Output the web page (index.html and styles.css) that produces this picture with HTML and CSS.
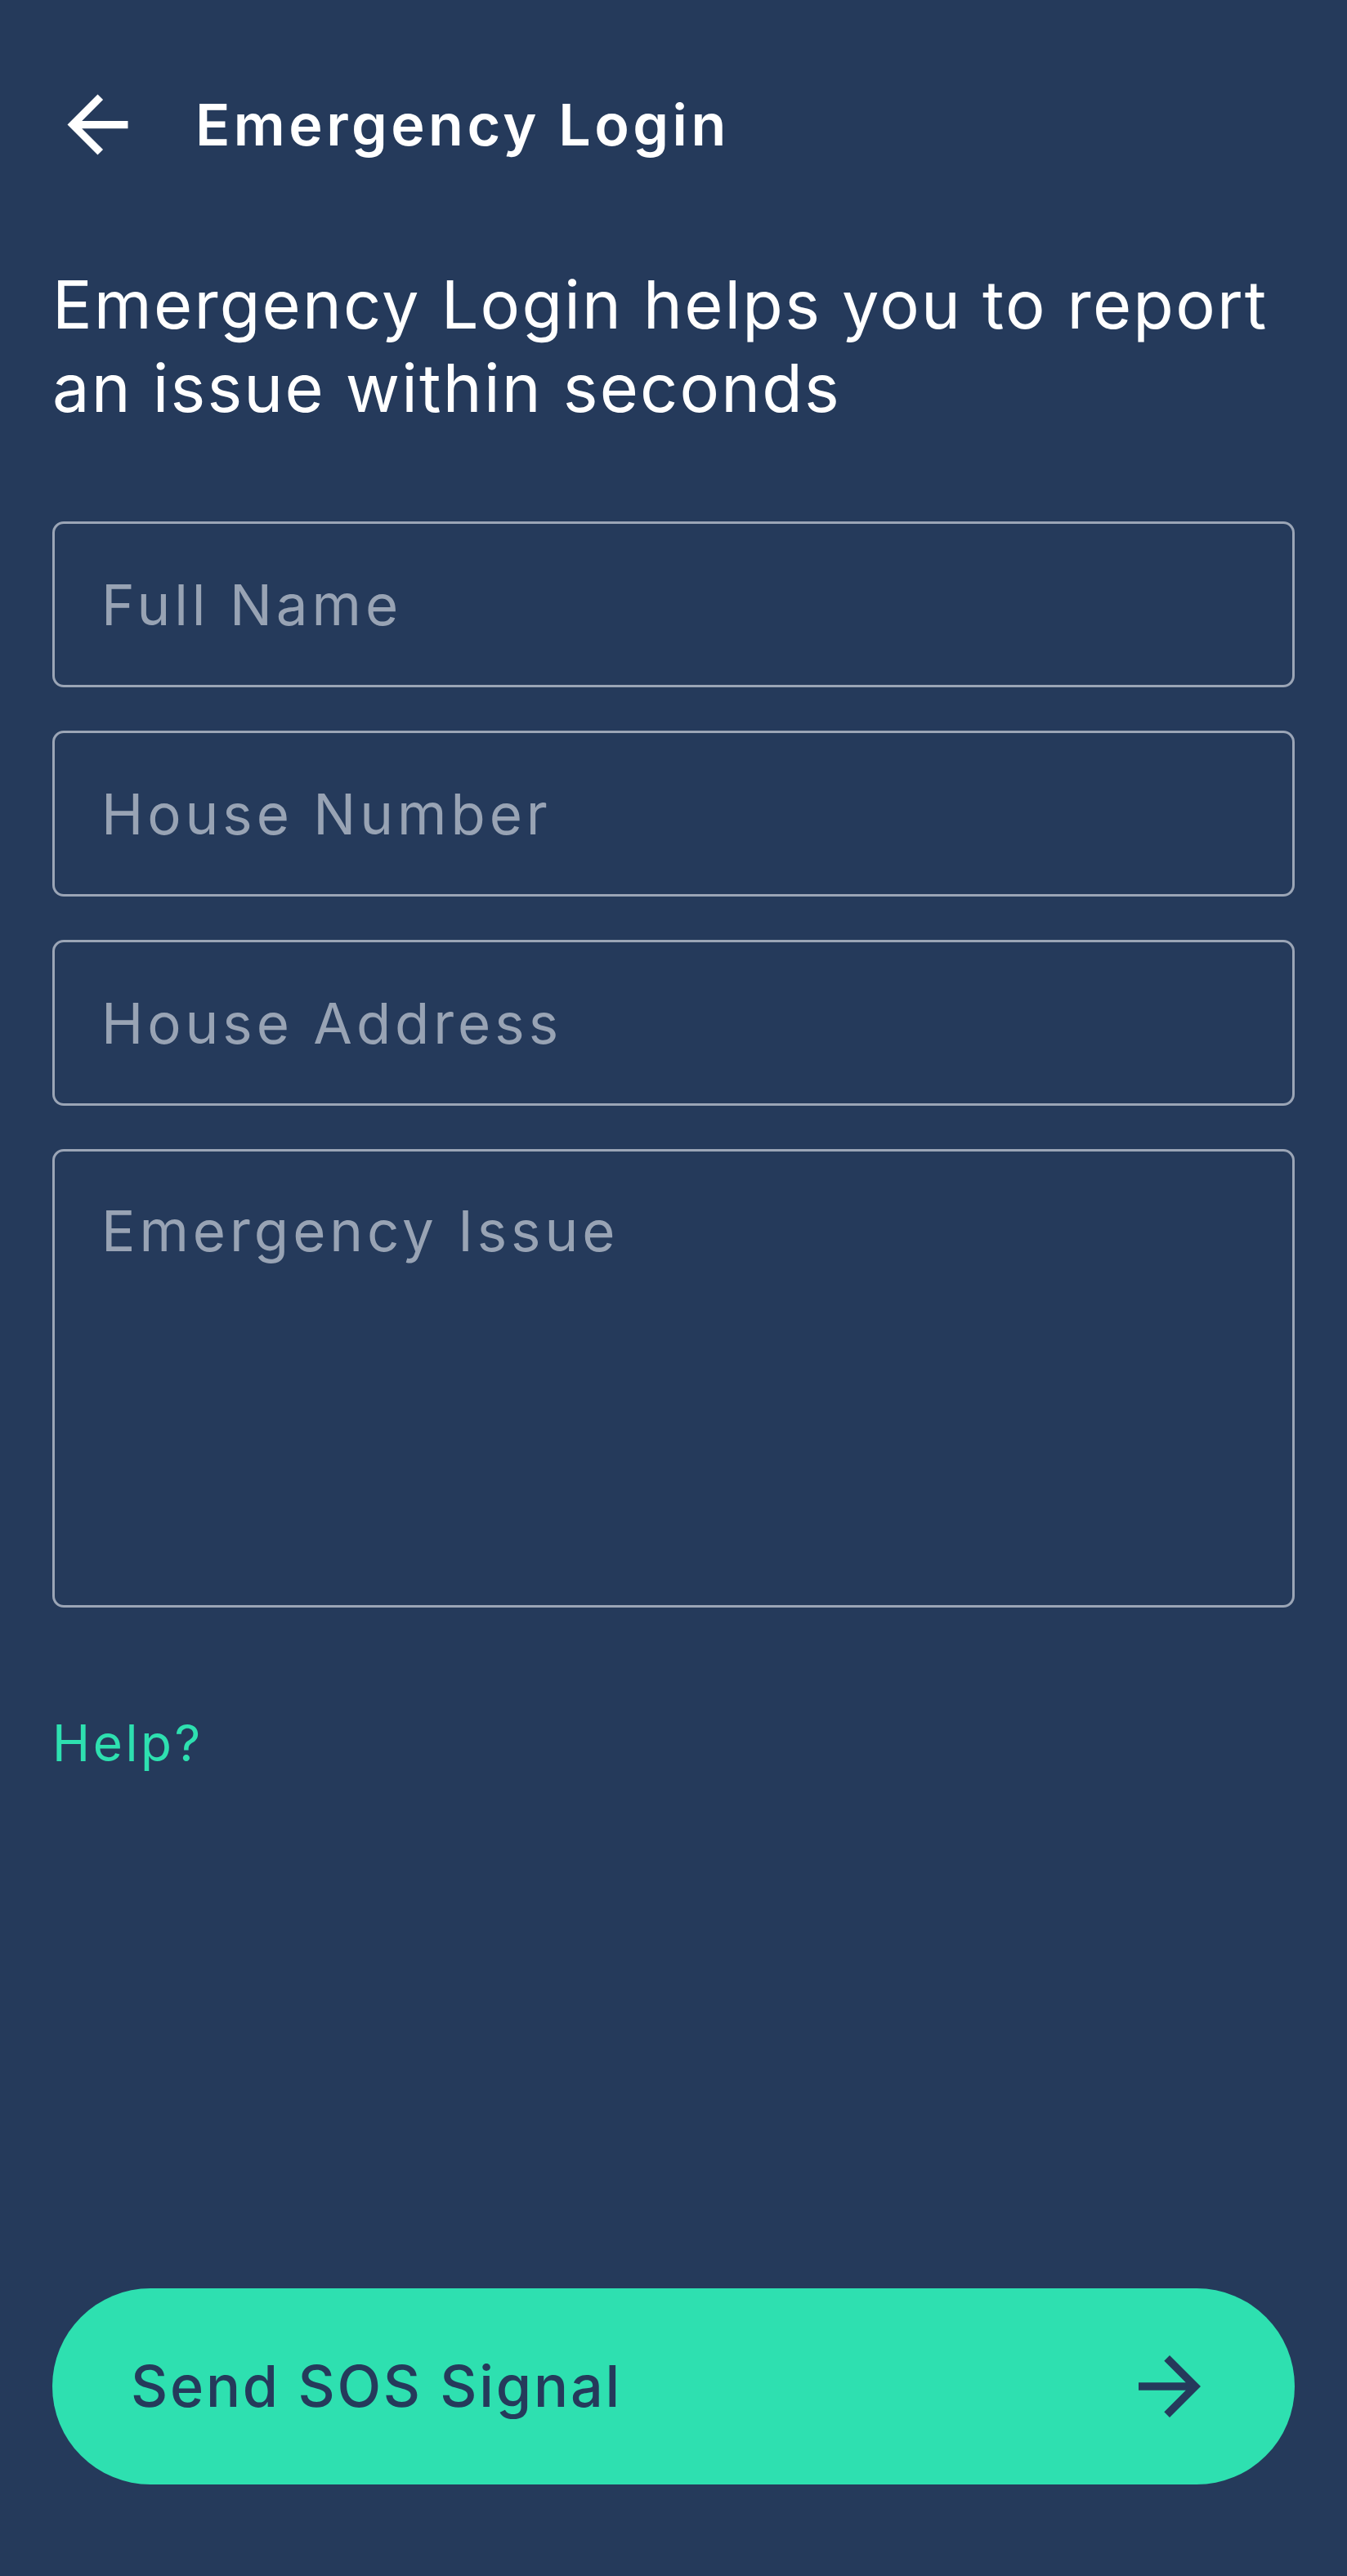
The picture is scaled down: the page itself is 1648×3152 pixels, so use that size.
FILE: index.html
```html
<!DOCTYPE html>
<html lang="en">
<head>
<meta charset="utf-8">
<title>Emergency Login</title>
<link rel="stylesheet" href="styles.css">
</head>
<body>
<div class="screen">
  <header class="topbar">
    <button class="back" type="button" aria-label="Back">
      <svg viewBox="0 0 24 24" aria-hidden="true"><path d="M20 11H7.830l5.590-5.590L12 4l-8 8 8 8 1.410-1.410L7.830 13H20v-2z"/></svg>
    </button>
    <h1 class="title">Emergency Login</h1>
  </header>
  <p class="intro">Emergency Login helps you to report an issue within seconds</p>
  <form class="form">
    <input class="field" type="text" placeholder="Full Name">
    <input class="field" type="text" placeholder="House Number">
    <input class="field" type="text" placeholder="House Address">
    <textarea class="field field--area" placeholder="Emergency Issue"></textarea>
  </form>
  <a class="help" href="#">Help?</a>
  <button class="sos" type="button">
    <span class="sos__label">Send SOS Signal</span>
    <svg class="sos__icon" viewBox="0 0 24 24" aria-hidden="true"><path d="M12 4l-1.41 1.41L16.17 11H4v2h12.17l-5.58 5.59L12 20l8-8z"/></svg>
  </button>
</div>
</body>
</html>
```
FILE: styles.css
```css
html, body {
  margin: 0;
  padding: 0;
  background: #253a5b;
}

body {
  font-family: Inter, "Open Sans", sans-serif;
  color: #ffffff;
}

.screen {
  box-sizing: border-box;
  min-height: 100vh;
  display: flex;
  flex-direction: column;
  padding: 97px 64px 112px;
}

.topbar {
  display: flex;
  align-items: center;
  gap: 64px;
  height: 111px;
}

.back {
  width: 111px;
  height: 111px;
  padding: 0;
  border: 0;
  background: none;
  flex: none;
}

.back svg {
  display: block;
  width: 111px;
  height: 111px;
  fill: #ffffff;
}

.title {
  margin: 0;
  font-size: 70px;
  font-weight: 600;
  line-height: 1;
  letter-spacing: 0.064em;
  color: #ffffff;
}

.intro {
  margin: 114px 0 0;
  font-size: 81px;
  font-weight: 400;
  line-height: 102px;
  letter-spacing: 0.027em;
  color: #ffffff;
}

.form {
  margin: 112px 0 0;
  display: flex;
  flex-direction: column;
  gap: 53px;
}

.field {
  box-sizing: border-box;
  display: block;
  width: 100%;
  height: 203px;
  margin: 0;
  padding: 0 57px;
  border: 3px solid #9ba5b6;
  border-radius: 14px;
  background: transparent;
  font-family: Inter, "Open Sans", sans-serif;
  font-size: 69px;
  font-weight: 400;
  line-height: 1;
  letter-spacing: 0.072em;
  color: #ffffff;
  outline: none;
}

.field::placeholder {
  color: #98a3b4;
  opacity: 1;
}

.field--area {
  height: 561px;
  padding: 63px 57px;
  resize: none;
}

.help {
  align-self: flex-start;
  margin-top: 135px;
  font-size: 62px;
  line-height: 1;
  letter-spacing: 0.058em;
  color: #2ee0b0;
  text-decoration: none;
}

.sos {
  margin-top: auto;
  display: flex;
  align-items: center;
  justify-content: space-between;
  height: 240px;
  padding: 0 96px;
  border: 0;
  border-radius: 120px;
  background: #2ee0b0;
  color: #253a5b;
  font-family: Inter, "Open Sans", sans-serif;
  font-size: 70px;
  font-weight: 500;
  line-height: 1;
  letter-spacing: 0.04em;
}

.sos__icon {
  width: 114px;
  height: 114px;
  fill: #253a5b;
  flex: none;
}
```
